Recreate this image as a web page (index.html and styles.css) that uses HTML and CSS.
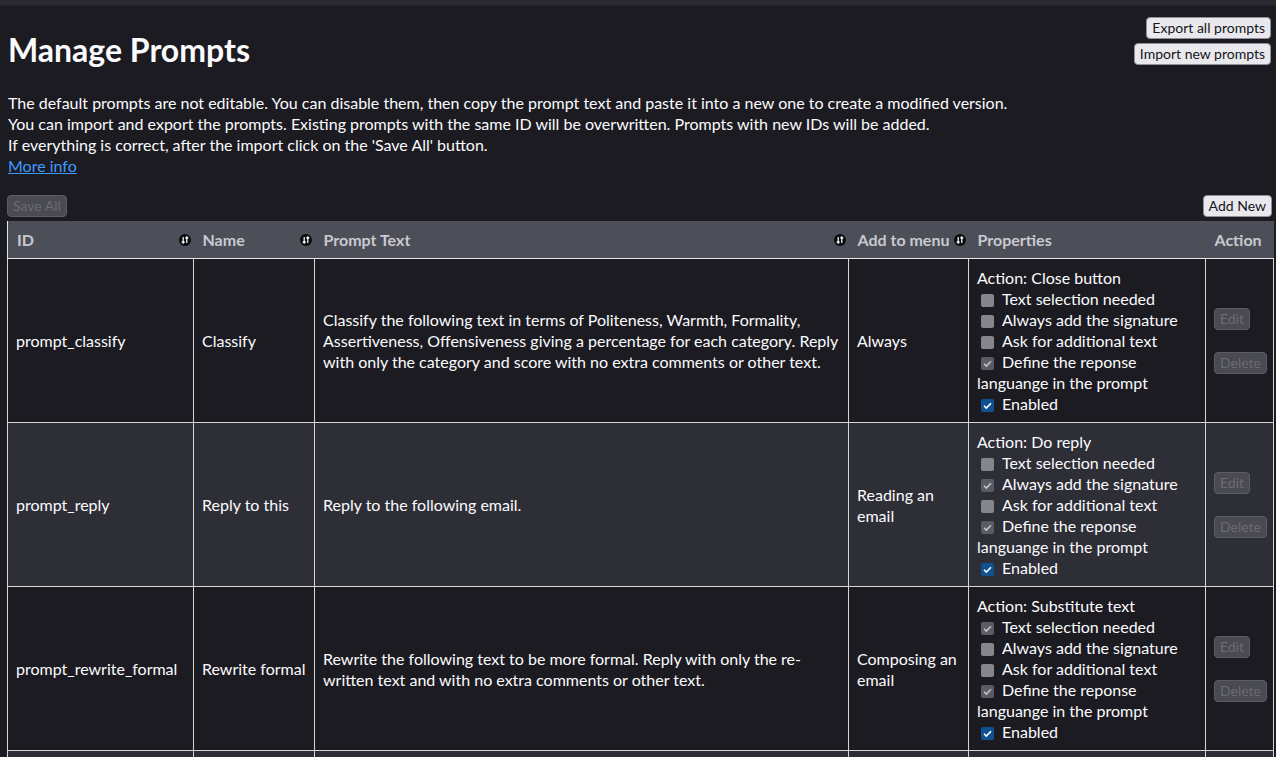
FILE: index.html
```html
<!DOCTYPE html>
<html>
<head>
  <title>Manage Prompts</title>
  <link rel="stylesheet" href="styles.css">
</head>
<body>
  <div class="topbar"></div>
  <div class="page">
    <div class="page-head">
      <h1>Manage Prompts</h1>
      <div class="io-buttons">
        <button class="btn">Export all prompts</button>
        <button class="btn">Import new prompts</button>
      </div>
    </div>
    <p class="intro">
      The default prompts are not editable. You can disable them, then copy the prompt text and paste it into a new one to create a modified version.<br>
      You can import and export the prompts. Existing prompts with the same ID will be overwritten. Prompts with new IDs will be added.<br>
      If everything is correct, after the import click on the 'Save All' button.<br>
      <a href="#">More info</a>
    </p>
    <div class="toolbar">
      <button class="btn" disabled>Save All</button>
      <button class="btn">Add New</button>
    </div>
    <table class="prompts">
      <colgroup>
        <col style="width:186px">
        <col style="width:121px">
        <col style="width:534px">
        <col style="width:120px">
        <col style="width:237px">
        <col style="width:68px">
      </colgroup>
      <thead>
        <tr>
          <th><span class="th-label">ID</span><span class="sort"><svg viewBox="0 0 12 12" width="12" height="12"><circle cx="6" cy="6" r="6" fill="#0c0c0e"/><path d="M4.2 3v6M2.8 7.6l1.4 1.6 1.4-1.6M7.8 9V3M6.4 4.4l1.4-1.6 1.4 1.6" stroke="#fff" stroke-width="1.2" fill="none"/></svg></span></th>
          <th><span class="th-label">Name</span><span class="sort"><svg viewBox="0 0 12 12" width="12" height="12"><circle cx="6" cy="6" r="6" fill="#0c0c0e"/><path d="M4.2 3v6M2.8 7.6l1.4 1.6 1.4-1.6M7.8 9V3M6.4 4.4l1.4-1.6 1.4 1.6" stroke="#fff" stroke-width="1.2" fill="none"/></svg></span></th>
          <th><span class="th-label">Prompt Text</span><span class="sort"><svg viewBox="0 0 12 12" width="12" height="12"><circle cx="6" cy="6" r="6" fill="#0c0c0e"/><path d="M4.2 3v6M2.8 7.6l1.4 1.6 1.4-1.6M7.8 9V3M6.4 4.4l1.4-1.6 1.4 1.6" stroke="#fff" stroke-width="1.2" fill="none"/></svg></span></th>
          <th><span class="th-label">Add to menu</span><span class="sort"><svg viewBox="0 0 12 12" width="12" height="12"><circle cx="6" cy="6" r="6" fill="#0c0c0e"/><path d="M4.2 3v6M2.8 7.6l1.4 1.6 1.4-1.6M7.8 9V3M6.4 4.4l1.4-1.6 1.4 1.6" stroke="#fff" stroke-width="1.2" fill="none"/></svg></span></th>
          <th>Properties</th>
          <th>Action</th>
        </tr>
      </thead>
      <tbody>
        <tr>
          <td>prompt_classify</td>
          <td>Classify</td>
          <td>Classify the following text in terms of Politeness, Warmth, Formality, Assertiveness, Offensiveness giving a percentage for each category. Reply with only the category and score with no extra comments or other text.</td>
          <td>Always</td>
          <td class="props">
            Action: Close button<br>
            <span class="cb"></span>Text selection needed<br>
            <span class="cb"></span>Always add the signature<br>
            <span class="cb"></span>Ask for additional text<br>
            <span class="cb checked"></span>Define the reponse languange in the prompt<br>
            <span class="cb enabled"></span>Enabled
          </td>
          <td><div class="actions"><button class="btn" disabled>Edit</button><button class="btn" disabled>Delete</button></div></td>
        </tr>
        <tr>
          <td>prompt_reply</td>
          <td>Reply to this</td>
          <td>Reply to the following email.</td>
          <td>Reading an email</td>
          <td class="props">
            Action: Do reply<br>
            <span class="cb"></span>Text selection needed<br>
            <span class="cb checked"></span>Always add the signature<br>
            <span class="cb"></span>Ask for additional text<br>
            <span class="cb checked"></span>Define the reponse languange in the prompt<br>
            <span class="cb enabled"></span>Enabled
          </td>
          <td><div class="actions"><button class="btn" disabled>Edit</button><button class="btn" disabled>Delete</button></div></td>
        </tr>
        <tr>
          <td>prompt_rewrite_formal</td>
          <td>Rewrite formal</td>
          <td>Rewrite the following text to be more formal. Reply with only the re-written text and with no extra comments or other text.</td>
          <td>Composing an email</td>
          <td class="props">
            Action: Substitute text<br>
            <span class="cb checked"></span>Text selection needed<br>
            <span class="cb"></span>Always add the signature<br>
            <span class="cb"></span>Ask for additional text<br>
            <span class="cb checked"></span>Define the reponse languange in the prompt<br>
            <span class="cb enabled"></span>Enabled
          </td>
          <td><div class="actions"><button class="btn" disabled>Edit</button><button class="btn" disabled>Delete</button></div></td>
        </tr>
        <tr class="next-row">
          <td></td>
          <td></td>
          <td></td>
          <td></td>
          <td></td>
          <td></td>
        </tr>
      </tbody>
    </table>
  </div>
</body>
</html>
```

FILE: styles.css
```css
body {
  margin: 0;
  background-color: #1c1b22;
  color: #fbfbfe;
  font-family: "Lato", sans-serif;
  font-size: 16px;
  line-height: 21px;
}
.topbar {
  height: 5px;
  background-color: #2b2a33;
  border-bottom: 1px solid #232229;
}
.page {
  padding: 0 3px 0 7px;
}
.page-head {
  display: flex;
  justify-content: space-between;
  align-items: flex-start;
}
h1 {
  margin: 26px 0 0 1px;
  font-size: 32px;
  line-height: 36px;
  font-weight: bold;
}
.io-buttons {
  display: flex;
  flex-direction: column;
  align-items: flex-end;
  gap: 4px;
  margin-top: 11px;
  margin-right: 2px;
}
.btn {
  font-family: "Lato", sans-serif;
  font-size: 14px;
  line-height: 18px;
  padding: 1px 5px;
  color: #15141a;
  background-color: #e9e9ed;
  border: 1px solid #8f8f9d;
  border-radius: 4px;
  cursor: pointer;
}
.btn:disabled {
  color: #6b6b73;
  background-color: #4a4a52;
  border-color: #5c5c64;
  cursor: default;
}
.intro {
  margin: 24px 0 0 1px;
}
.intro a {
  color: #3b9cff;
}
.toolbar {
  display: flex;
  justify-content: space-between;
  margin: 19px 0 4px;
}
.toolbar .btn:last-child {
  margin-right: 1px;
}
.prompts {
  width: 1266px;
  border-collapse: collapse;
  table-layout: fixed;
  border-left: 1px solid #e6e6e6;
}
.prompts th {
  position: relative;
  background-color: #4c4f58;
  color: #c9c9cf;
  font-weight: bold;
  text-align: left;
  padding: 8px 8px 8px 9px;
  border-bottom: 1px solid #e6e6e6;
}
.sort {
  position: absolute;
  right: 3px;
  top: 13px;
  line-height: 0;
}
.prompts td {
  padding: 8px;
  border: 1px solid #d6d6d6;
  vertical-align: middle;
}
.prompts tbody tr:nth-child(even) td {
  background-color: #2e2e37;
}
.next-row td {
  height: 40px;
}
.cb {
  display: inline-block;
  width: 13px;
  height: 13px;
  margin: 0 8px 0 4px;
  vertical-align: -2px;
  border-radius: 2px;
  background-color: #85858d;
}
.cb.checked {
  background: #5b5b66 url("data:image/svg+xml,%3Csvg xmlns='http://www.w3.org/2000/svg' viewBox='0 0 13 13'%3E%3Cpath d='M3 6.8l2.3 2.3L10 4.2' stroke='%23c4c4cc' stroke-width='1.6' fill='none'/%3E%3C/svg%3E") no-repeat center;
}
.cb.enabled {
  background: #0e5291 url("data:image/svg+xml,%3Csvg xmlns='http://www.w3.org/2000/svg' viewBox='0 0 13 13'%3E%3Cpath d='M3 6.8l2.3 2.3L10 4.2' stroke='%23ffffff' stroke-width='1.6' fill='none'/%3E%3C/svg%3E") no-repeat center;
}
.actions {
  display: flex;
  flex-direction: column;
  align-items: flex-start;
  gap: 22px;
}
```
